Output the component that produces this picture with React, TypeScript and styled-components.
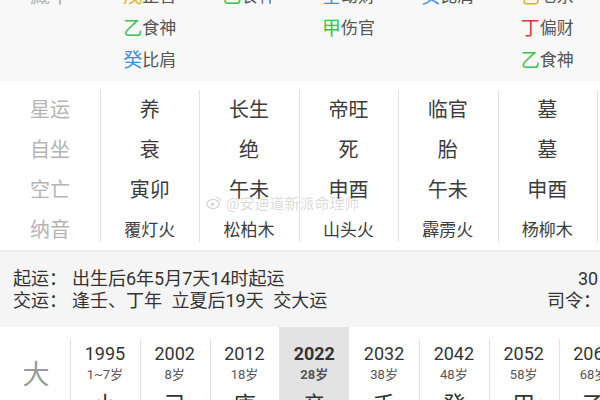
import React from "react";
import styled, { createGlobalStyle } from "styled-components";

const Global = createGlobalStyle`
  html, body { margin: 0; padding: 0; background: #fff; }
  body { font-family: Roboto, "Noto Sans CJK SC", sans-serif; width: 600px; height: 400px; overflow: hidden; }
`;

const Page = styled.div`
  width: 600px;
  height: 400px;
  overflow: hidden;
  position: relative;
`;

const TopSection = styled.div`
  background: #f8f8f8;
  height: 81px;
  overflow: hidden;
`;

const Grid = styled.div<{ $rowH: number; $offset?: number }>`
  display: grid;
  grid-template-columns: 100px repeat(5, 99.4px) 1fr;
  grid-auto-rows: ${(p) => p.$rowH}px;
  margin-top: ${(p) => p.$offset ?? 0}px;
`;

const Cell = styled.div`
  display: flex;
  align-items: center;
  justify-content: center;
  white-space: nowrap;
`;

const RowLabel = styled(Cell)`
  font-size: 20px;
  color: #b4b4b4;
`;

const Stem = styled.span<{ $c: string }>`
  font-size: 19px;
  color: ${(p) => p.$c};
`;

const God = styled.span`
  font-size: 17px;
  color: #555;
`;

const MidSection = styled.div`
  background: #fff;
  padding-top: 7px;
  height: 169px;
  box-sizing: border-box;
  box-shadow: 0 1px 2px rgba(0, 0, 0, 0.08);
  position: relative;
  z-index: 1;
`;

const ColCell = styled(Cell)<{ $small?: boolean; $first?: boolean; $last?: boolean }>`
  position: relative;
  font-size: ${(p) => (p.$small ? 17 : 20)}px;
  color: #3c3c3c;
  &::before {
    content: "";
    position: absolute;
    left: 0;
    top: ${(p) => (p.$first ? 2 : 0)}px;
    bottom: ${(p) => (p.$last ? 6 : 0)}px;
    border-left: 1px solid #e2e2e2;
  }
`;

const EdgeCell = styled(ColCell)``;

const InfoSection = styled.div`
  background: #f5f5f5;
  height: 77px;
  box-sizing: border-box;
  padding: 18px 0 0 13px;
  display: flex;
  font-size: 18px;
  color: #333;
`;

const InfoMain = styled.div`
  width: 534px;
  flex-shrink: 0;
  display: flex;
  flex-direction: column;
`;

const InfoSide = styled.div`
  display: flex;
  flex-direction: column;
  white-space: nowrap;
`;

const InfoLine = styled.div<{ $indent?: number }>`
  height: 22px;
  line-height: 22px;
  white-space: nowrap;
  word-spacing: 5px;
  padding-left: ${(p) => p.$indent ?? 0}px;
`;

const InfoKey = styled.span`
  margin-right: 5px;
`;

const LuckSection = styled.div`
  display: grid;
  grid-template-columns: 70px repeat(8, 69.8px);
  height: 73px;
  background: #fff;
`;

const LuckLabel = styled.div`
  display: flex;
  align-items: center;
  justify-content: center;
  font-size: 27px;
  color: #9a9a9a;
  padding-left: 2px;
`;

const LuckCol = styled.div<{ $active?: boolean; $noLine?: boolean }>`
  position: relative;
  background: ${(p) => (p.$active ? "#e3e3e3" : "transparent")};
  display: flex;
  flex-direction: column;
  align-items: center;
  padding-top: 17px;
  box-sizing: border-box;
  &::before {
    content: "";
    display: ${(p) => (p.$noLine ? "none" : "block")};
    position: absolute;
    left: 0;
    top: 12px;
    bottom: 0;
    border-left: 1px solid #e2e2e2;
  }
`;

const Year = styled.div<{ $active?: boolean }>`
  font-size: 18px;
  line-height: 20px;
  color: #333;
  font-weight: ${(p) => (p.$active ? 700 : 400)};
`;

const Age = styled.div<{ $active?: boolean }>`
  font-size: 13px;
  line-height: 22px;
  color: #555;
  font-weight: ${(p) => (p.$active ? 700 : 400)};
`;

const Big = styled.div`
  font-size: 23px;
  line-height: 24px;
  color: #333;
  margin-top: 8px;
`;

const Watermark = styled.div`
  position: absolute;
  left: 206px;
  top: 192px;
  font-size: 15px;
  color: rgba(120, 120, 120, 0.28);
  white-space: nowrap;
  z-index: 2;
  display: flex;
  align-items: center;
  gap: 4px;
`;

const COLORS: Record<string, string> = {
  甲: "#3fbf4f",
  乙: "#3fbf4f",
  丙: "#d33a3a",
  丁: "#d33a3a",
  戊: "#d8b526",
  己: "#d8b526",
  庚: "#e0a000",
  辛: "#e0a000",
  壬: "#3b8fde",
  癸: "#3b8fde",
};

const Entry = ({ t }: { t?: string }) =>
  t ? (
    <Cell>
      <Stem $c={COLORS[t[0]]}>{t[0]}</Stem>
      <God>{t.slice(1)}</God>
    </Cell>
  ) : (
    <Cell />
  );

const hiddenRows: (string | undefined)[][] = [
  ["戊正官", "乙食神", "壬劫财", "癸比肩", "己七杀"],
  ["乙食神", undefined, "甲伤官", undefined, "丁偏财"],
  ["癸比肩", undefined, undefined, undefined, "乙食神"],
];

const midRows: { label: string; vals: string[] }[] = [
  { label: "星运", vals: ["养", "长生", "帝旺", "临官", "墓"] },
  { label: "自坐", vals: ["衰", "绝", "死", "胎", "墓"] },
  { label: "空亡", vals: ["寅卯", "午未", "申酉", "午未", "申酉"] },
  { label: "纳音", vals: ["覆灯火", "松柏木", "山头火", "霹雳火", "杨柳木"] },
];

const luck = [
  { y: "1995", a: "1~7岁", c: "小" },
  { y: "2002", a: "8岁", c: "己" },
  { y: "2012", a: "18岁", c: "庚" },
  { y: "2022", a: "28岁", c: "辛", active: true },
  { y: "2032", a: "38岁", c: "壬" },
  { y: "2042", a: "48岁", c: "癸" },
  { y: "2052", a: "58岁", c: "甲" },
  { y: "2062", a: "68岁", c: "乙" },
];

export default function App() {
  return (
    <Page>
      <Global />
      <TopSection>
        <Grid $rowH={32} $offset={-22}>
          {hiddenRows.map((row, i) => (
            <React.Fragment key={i}>
              <RowLabel>{i === 0 ? "藏干" : ""}</RowLabel>
              {row.map((t, j) => (
                <Entry key={j} t={t} />
              ))}
              <Cell />
            </React.Fragment>
          ))}
        </Grid>
      </TopSection>
      <MidSection>
        <Grid $rowH={40}>
          {midRows.map((r, i) => (
            <React.Fragment key={r.label}>
              <RowLabel>{r.label}</RowLabel>
              {r.vals.map((v, j) => (
                <ColCell key={j} $small={i === 3} $first={i === 0} $last={i === 3}>
                  {v}
                </ColCell>
              ))}
              <EdgeCell $first={i === 0} $last={i === 3} />
            </React.Fragment>
          ))}
        </Grid>
      </MidSection>
      <InfoSection>
        <InfoMain>
          <InfoLine>
            <InfoKey>起运：</InfoKey>出生后6年5月7天14时起运
          </InfoLine>
          <InfoLine>
            <InfoKey>交运：</InfoKey>逢壬、丁年 立夏后19天 交大运
          </InfoLine>
        </InfoMain>
        <InfoSide>
          <InfoLine $indent={31}>30岁</InfoLine>
          <InfoLine>司令：戊土</InfoLine>
        </InfoSide>
      </InfoSection>
      <LuckSection>
        <LuckLabel>大</LuckLabel>
        {luck.map((l, i) => (
          <LuckCol key={l.y} $active={l.active} $noLine={l.active || (i > 0 && luck[i - 1].active)}>
            <Year $active={l.active}>{l.y}</Year>
            <Age $active={l.active}>{l.a}</Age>
            <Big>{l.c}</Big>
          </LuckCol>
        ))}
      </LuckSection>
      <Watermark>
        <svg width="16" height="13" viewBox="0 0 15 13">
          <ellipse cx="6.5" cy="8" rx="6" ry="4.5" fill="none" stroke="rgba(120,120,120,0.35)" strokeWidth="1.2" />
          <circle cx="6" cy="8.3" r="1.6" fill="rgba(120,120,120,0.35)" />
          <path d="M10 1.5 A4 4 0 0 1 14 5.5" fill="none" stroke="rgba(120,120,120,0.35)" strokeWidth="1.2" />
        </svg>
        <span>@安迪道新派命理师</span>
      </Watermark>
    </Page>
  );
}
